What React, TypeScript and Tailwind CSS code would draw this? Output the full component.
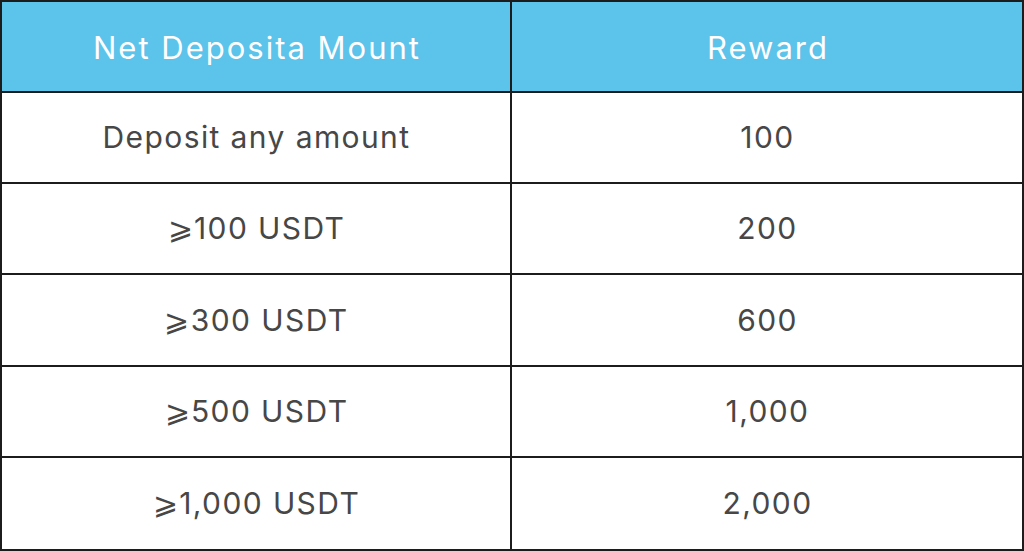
const rows = [
  { amount: 'Deposit any amount', reward: '100' },
  { amount: '⩾100 USDT', reward: '200' },
  { amount: '⩾300 USDT', reward: '600' },
  { amount: '⩾500 USDT', reward: '1,000' },
  { amount: '⩾1,000 USDT', reward: '2,000' },
]

export default function App() {
  return (
    <div
      className="h-[551px] w-[1024px] bg-white"
      style={{ fontFamily: 'Inter, "Noto Sans", "Liberation Sans", sans-serif' }}
    >
      <div className="grid h-full w-full grid-cols-2 grid-rows-6 border-2 border-[#1c1c1c]">
        <div className="flex items-center justify-center border-r-2 border-b-2 border-[#1c1c1c] bg-[#5cc3eb] pt-1 pl-[2px] text-[31px] tracking-[2px] text-white">
          Net Deposita Mount
        </div>
        <div className="flex items-center justify-center border-b-2 border-[#1c1c1c] bg-[#5cc3eb] pt-1 pl-[2px] text-[31px] tracking-[2px] text-white">
          Reward
        </div>
        {rows.map((row, i) => (
          <div key={row.amount} className="contents">
            <div
              className={`flex items-center justify-center border-r-2 border-[#1c1c1c] pl-[1px] text-[30px] tracking-[1.4px] text-[#474747] ${
                i < rows.length - 1 ? 'border-b-2' : ''
              }`}
            >
              {row.amount}
            </div>
            <div
              className={`flex items-center justify-center border-[#1c1c1c] pl-[1px] text-[30px] tracking-[1.4px] text-[#474747] ${
                i < rows.length - 1 ? 'border-b-2' : ''
              }`}
            >
              {row.reward}
            </div>
          </div>
        ))}
      </div>
    </div>
  )
}
